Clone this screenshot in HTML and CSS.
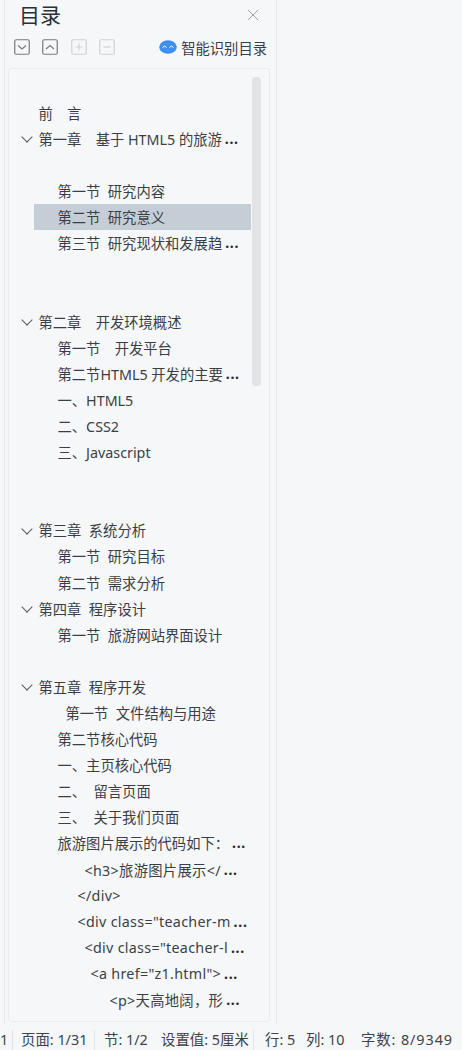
FILE: index.html
```html
<!DOCTYPE html>
<html lang="zh">
<head>
<meta charset="utf-8">
<title>目录</title>
<link rel="stylesheet" href="styles.css">
</head>
<body>
<div class="main">
  <aside class="panel">
    <header class="head">
      <h1 class="title">目录</h1>
      <svg class="close" viewBox="0 0 14 14"><path d="M1 1l12 12M13 1L1 13"/></svg>
    </header>
    <div class="tools">
      <svg class="tool" viewBox="0 0 16 16"><rect x=".75" y=".75" width="14.5" height="14.5" rx="1.5"/><path d="M4 6.5l4 3.5 4-3.5"/></svg>
      <svg class="tool" viewBox="0 0 16 16"><rect x=".75" y=".75" width="14.5" height="14.5" rx="1.5"/><path d="M4 10l4-3.5 4 3.5"/></svg>
      <svg class="tool off" viewBox="0 0 16 16"><rect x=".75" y=".75" width="14.5" height="14.5" rx="1.5"/><path d="M4.5 8h7M8 4.5v7"/></svg>
      <svg class="tool off" viewBox="0 0 16 16"><rect x=".75" y=".75" width="14.5" height="14.5" rx="1.5"/><path d="M4.5 8h7"/></svg>
      <div class="smart">
        <svg class="bot" viewBox="0 0 18 14"><ellipse cx="9" cy="7" rx="8.8" ry="6.8" fill="#3f8ff0"/><path d="M3.5 7.5l2-1.5 2 1.5M10.5 7.5l2-1.5 2 1.5" fill="none" stroke="#fff" stroke-width="1"/></svg>
        <span>智能识别目录</span>
      </div>
    </div>
    <div class="box">
      <div class="thumb"></div>
      <ul class="toc">
        <li class="row l1">前　言</li>
        <li class="row l1 open"><span class="txt">第一章　基于 HTML5 的旅游</span><b class="more">...</b></li>
        <li class="row"></li>
        <li class="row l2">第一节&nbsp; 研究内容</li>
        <li class="row l2 sel">第二节&nbsp; 研究意义</li>
        <li class="row l2"><span class="txt">第三节&nbsp; 研究现状和发展趋</span><b class="more">...</b></li>
        <li class="row"></li>
        <li class="row"></li>
        <li class="row l1 open">第二章　开发环境概述</li>
        <li class="row l2">第一节　开发平台</li>
        <li class="row l2"><span class="txt">第二节HTML5 开发的主要</span><b class="more">...</b></li>
        <li class="row l2">一、HTML5</li>
        <li class="row l2">二、CSS2</li>
        <li class="row l2">三、Javascript</li>
        <li class="row"></li>
        <li class="row"></li>
        <li class="row l1 open">第三章&nbsp; 系统分析</li>
        <li class="row l2">第一节&nbsp; 研究目标</li>
        <li class="row l2">第二节&nbsp; 需求分析</li>
        <li class="row l1 open">第四章&nbsp; 程序设计</li>
        <li class="row l2">第一节&nbsp; 旅游网站界面设计</li>
        <li class="row"></li>
        <li class="row l1 open">第五章&nbsp; 程序开发</li>
        <li class="row l3">第一节&nbsp; 文件结构与用途</li>
        <li class="row l2">第二节核心代码</li>
        <li class="row l2">一、主页核心代码</li>
        <li class="row l2">二、&nbsp; 留言页面</li>
        <li class="row l2">三、&nbsp; 关于我们页面</li>
        <li class="row l2"><span class="txt">旅游图片展示的代码如下：</span><b class="more">...</b></li>
        <li class="row l4 code"><span class="txt">&lt;h3&gt;旅游图片展示&lt;/</span><b class="more">...</b></li>
        <li class="row l5 code">&lt;/div&gt;</li>
        <li class="row l5 code"><span class="txt">&lt;div class="teacher-m</span><b class="more">...</b></li>
        <li class="row l4 code"><span class="txt">&lt;div class="teacher-l</span><b class="more">...</b></li>
        <li class="row l6 code"><span class="txt">&lt;a href="z1.html"&gt;</span><b class="more">...</b></li>
        <li class="row l7 code"><span class="txt">&lt;p&gt;天高地阔，形</span><b class="more">...</b></li>
      </ul>
    </div>
  </aside>
</div>
<footer class="status">
  <span class="s0">1</span>
  <span class="s1">页面: 1/31</span>
  <span class="s2">节: 1/2</span>
  <span class="s3">设置值: 5厘米</span>
  <span class="s4">行: 5</span>
  <span class="s5">列: 10</span>
  <span class="s6">字数: 8/9349</span>
</footer>
</body>
</html>
```
FILE: styles.css
```css
* { box-sizing: border-box; }
html, body { margin: 0; padding: 0; }
body {
  width: 462px;
  height: 1050px;
  overflow: hidden;
  background: #f6f7f9;
  font-family: "Noto Sans", "Noto Sans CJK SC", sans-serif;
  color: #33373d;
  display: flex;
  flex-direction: column;
}
.main { height: 1024px; padding-left: 4px; }
.panel {
  width: 273px;
  height: 1024px;
  border-left: 1px solid #e6e8eb;
  border-right: 1px solid #e6e8eb;
  padding-left: 3px;
}
.head {
  height: 32px;
  display: flex;
  align-items: center;
  justify-content: space-between;
  padding: 0 17px 0 12px;
}
.title { margin: 0; font-size: 21px; font-weight: 400; line-height: 32px; color: #2c3036; margin-left: -1px; margin-top: -2px; }
.close { width: 12px; height: 12px; fill: none; stroke: #8f9296; stroke-width: 1; margin-top: -2px; }
.tools {
  height: 30px;
  margin-bottom: 6px;
  display: flex;
  align-items: center;
  padding: 0 9px 0 5.5px;
  gap: 12.5px;
}
.tool { width: 16px; height: 16px; fill: none; stroke: #777b80; stroke-width: 1.2; flex: none; }
.tool.off { stroke: #cfd2d6; }
.smart { margin-left: auto; display: flex; align-items: center; gap: 4px; font-size: 14.3px; color: #3a3e44; }
.bot { width: 18px; height: 14px; }
.box {
  position: relative;
  width: 262px;
  height: 954px;
  border: 1px solid #e9ebee;
  border-radius: 3px;
  padding-top: 30.3px;
  overflow: hidden;
}
.thumb {
  position: absolute;
  left: 243px;
  top: 8px;
  width: 9px;
  height: 309px;
  border-radius: 4px;
  background: #e1e3e6;
}
.toc { list-style: none; margin: 0; padding: 0; }
.row {
  position: relative;
  display: flex;
  align-items: center;
  height: 26.1px;
  font-size: 14.3px;
  white-space: nowrap;
  width: 242px;
  color: #3b3f45;
}
.code { letter-spacing: .3px; }
.txt { overflow: hidden; }
.more { margin-left: 3px; font-weight: 700; font-size: 14px; letter-spacing: .7px; color: #26292d; }
.l1 { padding-left: 29.5px; }
.l2 { padding-left: 48.5px; }
.l3 { padding-left: 56.5px; }
.l4 { padding-left: 75.5px; }
.l5 { padding-left: 68.5px; }
.l6 { padding-left: 81.5px; }
.l7 { padding-left: 100.5px; }
.sel { background: linear-gradient(#c5ced6, #c5ced6) 25px 0 / 217px 100% no-repeat; }
.open::before {
  content: "";
  position: absolute;
  left: 13.5px;
  top: 8px;
  width: 7px;
  height: 7px;
  border-right: 1px solid #555a60;
  border-bottom: 1px solid #555a60;
  transform: rotate(45deg);
}
.status {
  height: 26px;
  display: flex;
  align-items: center;
  font-size: 14.4px;
  line-height: 20px;
  color: #3f4349;
  white-space: nowrap;
  padding-top: 5px;
}
.status span { flex: none; }
.s0 { width: 13px; border-right: 1px solid #dfe1e4; }
.s1 { margin-left: 8px; width: 73px; }
.s2 { padding-left: 9px; width: 58px; border-left: 1px solid #e3e5e8; }
.s3 { margin-left: 9px; width: 92px; }
.s4 { padding-left: 11px; width: 53px; border-left: 1px solid #e3e5e8; }
.s5 { width: 55px; }
.s6 { letter-spacing: .9px; }
```
